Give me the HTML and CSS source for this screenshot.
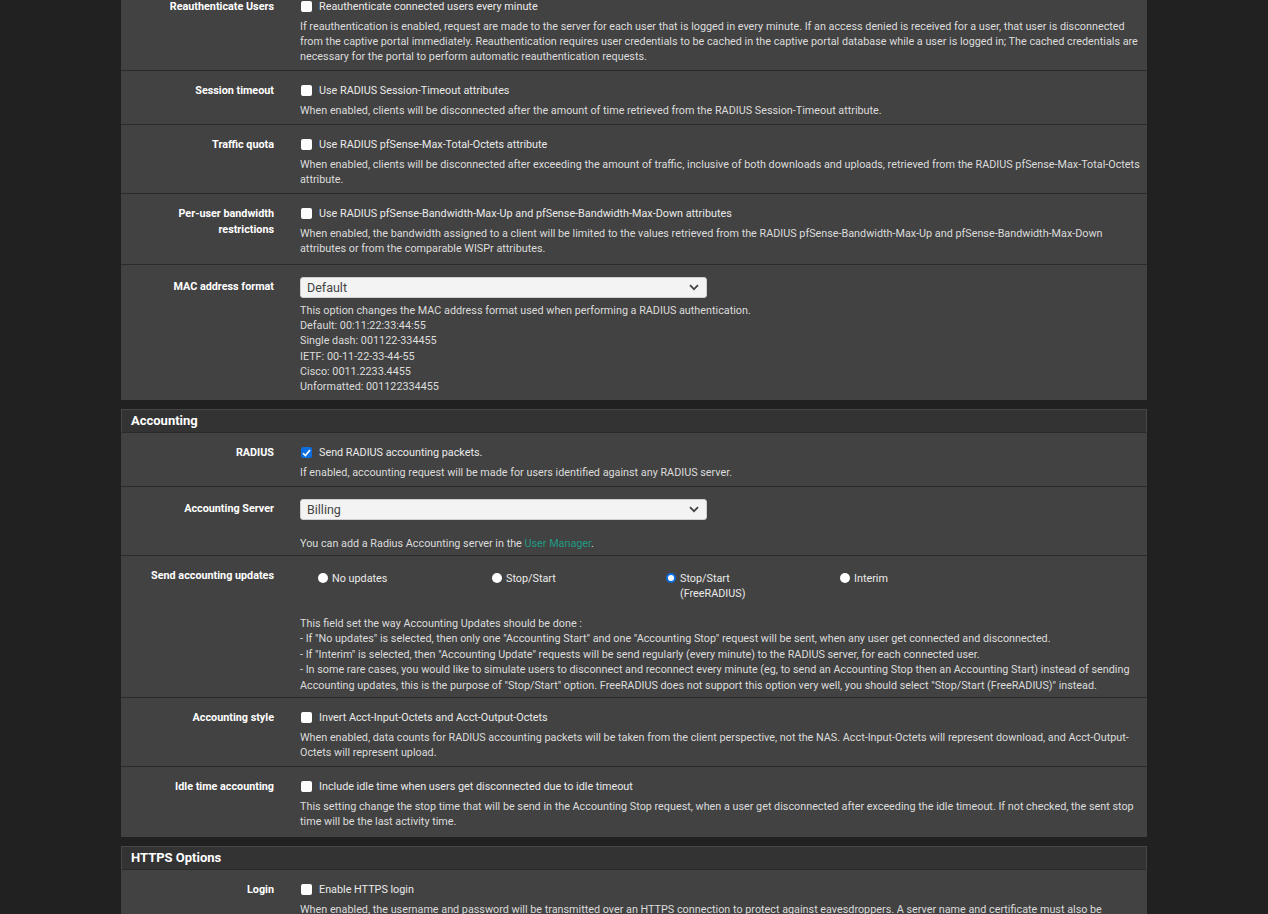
FILE: index.html
```html
<!DOCTYPE html>
<html>
<head>
<meta charset="utf-8">
<link rel="stylesheet" href="styles.css">
</head>
<body>
<div class="page">
  <div class="panel panel-first">
    <div class="panel-body">
      <div class="row">
        <div class="label">Reauthenticate Users</div>
        <div class="ctrl">
          <label class="check"><span class="cb"></span>Reauthenticate connected users every minute</label>
          <div class="help">If reauthentication is enabled, request are made to the server for each user that is logged in every minute. If an access denied is received for a user, that user is disconnected from the captive portal immediately. Reauthentication requires user credentials to be cached in the captive portal database while a user is logged in; The cached credentials are necessary for the portal to perform automatic reauthentication requests.</div>
        </div>
      </div>
      <div class="row">
        <div class="label">Session timeout</div>
        <div class="ctrl">
          <label class="check"><span class="cb"></span>Use RADIUS Session-Timeout attributes</label>
          <div class="help">When enabled, clients will be disconnected after the amount of time retrieved from the RADIUS Session-Timeout attribute.</div>
        </div>
      </div>
      <div class="row">
        <div class="label">Traffic quota</div>
        <div class="ctrl">
          <label class="check"><span class="cb"></span>Use RADIUS pfSense-Max-Total-Octets attribute</label>
          <div class="help">When enabled, clients will be disconnected after exceeding the amount of traffic, inclusive of both downloads and uploads, retrieved from the RADIUS pfSense-Max-Total-Octets attribute.</div>
        </div>
      </div>
      <div class="row row-loose">
        <div class="label">Per-user bandwidth<br>restrictions</div>
        <div class="ctrl">
          <label class="check"><span class="cb"></span>Use RADIUS pfSense-Bandwidth-Max-Up and pfSense-Bandwidth-Max-Down attributes</label>
          <div class="help">When enabled, the bandwidth assigned to a client will be limited to the values retrieved from the RADIUS pfSense-Bandwidth-Max-Up and pfSense-Bandwidth-Max-Down attributes or from the comparable WISPr attributes.</div>
        </div>
      </div>
      <div class="row">
        <div class="label label-sel">MAC address format</div>
        <div class="ctrl">
          <div class="select"><span>Default</span><svg class="chev" width="10" height="7" viewBox="0 0 10 7"><path d="M1 1.2 L5 5.2 L9 1.2" fill="none" stroke="#444" stroke-width="1.8"/></svg></div>
          <div class="help">This option changes the MAC address format used when performing a RADIUS authentication.<br>Default: 00:11:22:33:44:55<br>Single dash: 001122-334455<br>IETF: 00-11-22-33-44-55<br>Cisco: 0011.2233.4455<br>Unformatted: 001122334455</div>
        </div>
      </div>
    </div>
  </div>

  <div class="panel">
    <div class="panel-heading">Accounting</div>
    <div class="panel-body">
      <div class="row">
        <div class="label">RADIUS</div>
        <div class="ctrl">
          <label class="check"><span class="cb checked"><svg width="9" height="8" viewBox="0 0 9 8"><path d="M1 4.2 L3.4 6.6 L8 1" fill="none" stroke="#fff" stroke-width="1.6"/></svg></span>Send RADIUS accounting packets.</label>
          <div class="help">If enabled, accounting request will be made for users identified against any RADIUS server.</div>
        </div>
      </div>
      <div class="row row-tight">
        <div class="label label-sel">Accounting Server</div>
        <div class="ctrl">
          <div class="select"><span>Billing</span><svg class="chev" width="10" height="7" viewBox="0 0 10 7"><path d="M1 1.2 L5 5.2 L9 1.2" fill="none" stroke="#444" stroke-width="1.8"/></svg></div>
          <div class="help help-gap">You can add a Radius Accounting server in the <a href="#">User Manager</a>.</div>
        </div>
      </div>
      <div class="row row-tight">
        <div class="label">Send accounting updates</div>
        <div class="ctrl">
          <div class="radios">
            <label class="radio"><span class="rb"></span><span>No updates</span></label>
            <label class="radio"><span class="rb"></span><span>Stop/Start</span></label>
            <label class="radio"><span class="rb on"></span><span>Stop/Start<br>(FreeRADIUS)</span></label>
            <label class="radio"><span class="rb"></span><span>Interim</span></label>
          </div>
          <div class="help help-radio">This field set the way Accounting Updates should be done :<br>- If "No updates" is selected, then only one "Accounting Start" and one "Accounting Stop" request will be sent, when any user get connected and disconnected.<br>- If "Interim" is selected, then "Accounting Update" requests will be send regularly (every minute) to the RADIUS server, for each connected user.<br>- In some rare cases, you would like to simulate users to disconnect and reconnect every minute (eg, to send an Accounting Stop then an Accounting Start) instead of sending Accounting updates, this is the purpose of "Stop/Start" option. FreeRADIUS does not support this option very well, you should select "Stop/Start (FreeRADIUS)" instead.</div>
        </div>
      </div>
      <div class="row">
        <div class="label">Accounting style</div>
        <div class="ctrl">
          <label class="check"><span class="cb"></span>Invert Acct-Input-Octets and Acct-Output-Octets</label>
          <div class="help">When enabled, data counts for RADIUS accounting packets will be taken from the client perspective, not the NAS. Acct-Input-Octets will represent download, and Acct-Output-Octets will represent upload.</div>
        </div>
      </div>
      <div class="row row-end">
        <div class="label">Idle time accounting</div>
        <div class="ctrl">
          <label class="check"><span class="cb"></span>Include idle time when users get disconnected due to idle timeout</label>
          <div class="help">This setting change the stop time that will be send in the Accounting Stop request, when a user get disconnected after exceeding the idle timeout. If not checked, the sent stop time will be the last activity time.</div>
        </div>
      </div>
    </div>
  </div>

  <div class="panel">
    <div class="panel-heading">HTTPS Options</div>
    <div class="panel-body">
      <div class="row">
        <div class="label">Login</div>
        <div class="ctrl">
          <label class="check"><span class="cb"></span>Enable HTTPS login</label>
          <div class="help">When enabled, the username and password will be transmitted over an HTTPS connection to protect against eavesdroppers. A server name and certificate must also be specified below.</div>
        </div>
      </div>
    </div>
  </div>
</div>
</body>
</html>
```
FILE: styles.css
```css
html, body {
  margin: 0;
  padding: 0;
  background: #212121;
  height: 914px;
  overflow: hidden;
}
body {
  font-family: Roboto, "Liberation Sans", sans-serif;
  font-size: 10.8px;
  line-height: 15.2px;
  color: #e6e6e6;
}
.page {
  width: 1026px;
  margin-left: 121px;
  margin-top: -13px;
}
.panel {
  margin-bottom: 9px;
}
.panel-heading {
  background: #333333;
  border: 1px solid #474747;
  border-bottom-color: #2a2a2a;
  color: #ffffff;
  font-weight: bold;
  font-size: 13px;
  height: 22px;
  line-height: 22px;
  padding-left: 9px;
}
.panel-body {
  background: #424242;
}
.row {
  display: grid;
  grid-template-columns: 153px 841px;
  column-gap: 26px;
  padding: 12px 0 6px;
  border-bottom: 1px solid #2b2b2b;
}
.row:last-child {
  border-bottom: none;
}
.row-loose {
  padding-bottom: 8px;
}
.row-tight {
  padding-bottom: 4px;
}
.row-end {
  padding-bottom: 8px;
}
.label {
  text-align: right;
  font-weight: bold;
  color: #ffffff;
}
.label-sel {
  padding-top: 2px;
}
.check {
  display: flex;
  align-items: center;
  color: #eaeaea;
}
.cb {
  width: 11px;
  height: 11px;
  background: #fff;
  border-radius: 2px;
  margin: 0 7px 0 1px;
  display: inline-flex;
  align-items: center;
  justify-content: center;
}
.cb.checked {
  background: #0b6de0;
}
.help {
  margin-top: 4.5px;
  color: #dcdcdc;
}
.select {
  box-sizing: border-box;
  width: 407px;
  height: 21px;
  background: #f3f3f3;
  border: 1px solid #cfcfcf;
  border-radius: 3px;
  display: flex;
  align-items: center;
  justify-content: space-between;
  padding: 0 7px 0 6px;
  color: #444;
  font-size: 12.5px;
}
.select + .help {
  margin-top: 4.5px;
}
.select + .help.help-gap {
  margin-top: 16px;
}
a {
  color: #1f9b82;
  text-decoration: none;
}
.radios {
  display: grid;
  grid-template-columns: repeat(4, 174px);
  padding-left: 18px;
  padding-top: 3px;
}
.radio {
  display: flex;
  align-items: flex-start;
  color: #eaeaea;
}
.rb {
  width: 10px;
  height: 10px;
  border-radius: 50%;
  background: #fff;
  margin: 2px 4px 0 0;
  flex: none;
}
.rb.on {
  box-sizing: border-box;
  border: 2px solid #0b6de0;
  box-shadow: inset 0 0 0 1px #fff;
}
.help-radio {
  margin-top: 14px;
  line-height: 15.5px;
}
```
